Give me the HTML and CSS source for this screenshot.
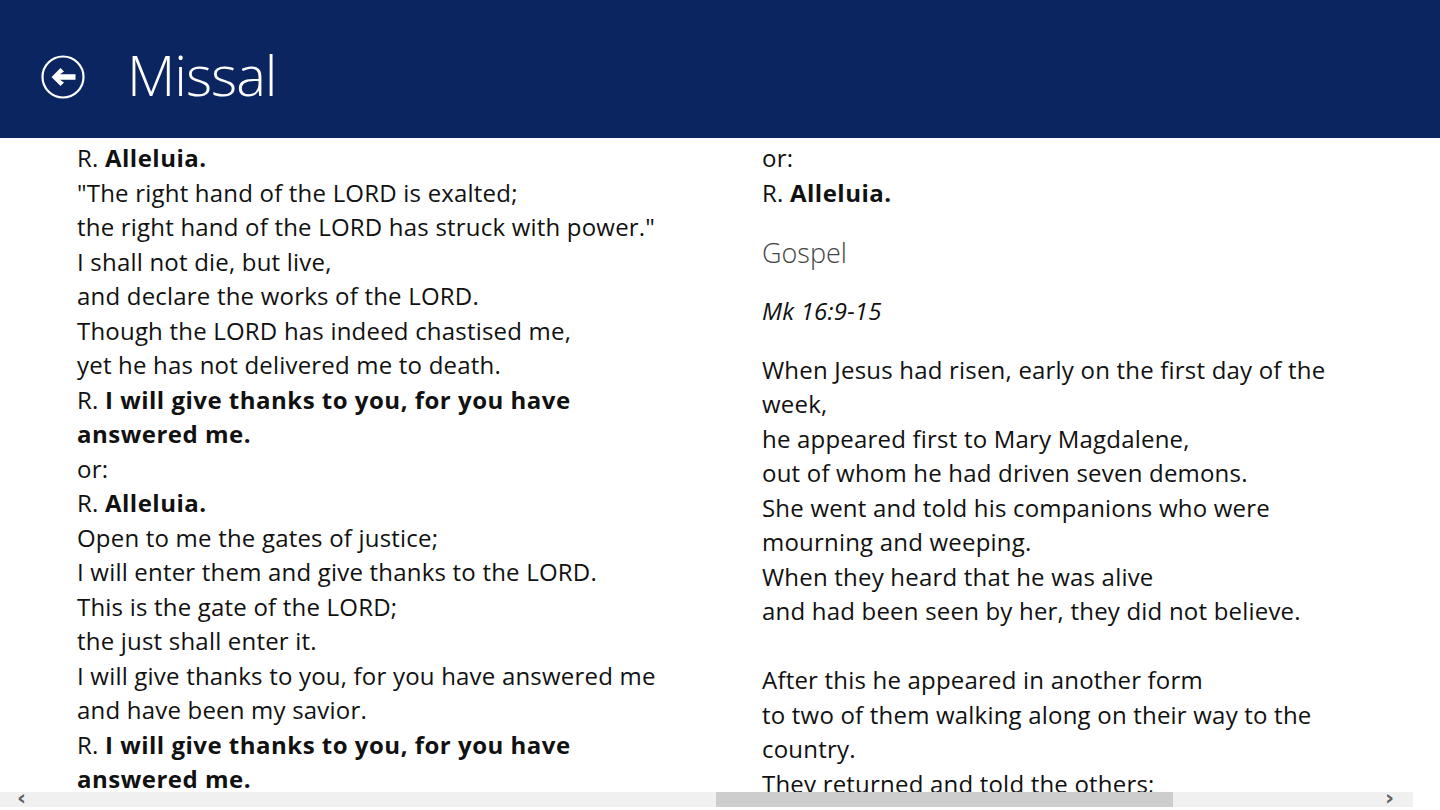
FILE: index.html
```html
<!DOCTYPE html>
<html lang="en">
<head>
<meta charset="utf-8">
<title>Missal</title>
<link rel="stylesheet" href="styles.css">
</head>
<body>
<header class="header">
  <button class="back" aria-label="Back">
    <svg width="46" height="46" viewBox="0 0 46 46">
      <circle cx="23" cy="23" r="20.5" fill="none" stroke="#fff" stroke-width="2.2"/>
      <polygon points="11.5,23 20.5,14 24,17.5 20,20.3 35.5,20.3 35.5,25.7 20,25.7 24,28.5 20.5,32" fill="#fff"/>
    </svg>
  </button>
  <h1 class="title">Missal</h1>
</header>
<main class="viewport">
  <div class="columns">
    <section class="col">
      <p class="line">R. <b>Alleluia.</b></p>
      <p class="line">"The right hand of the LORD is exalted;</p>
      <p class="line">the right hand of the LORD has struck with power."</p>
      <p class="line">I shall not die, but live,</p>
      <p class="line">and declare the works of the LORD.</p>
      <p class="line">Though the LORD has indeed chastised me,</p>
      <p class="line">yet he has not delivered me to death.</p>
      <p class="line">R. <b>I will give thanks to you, for you have answered me.</b></p>
      <p class="line">or:</p>
      <p class="line">R. <b>Alleluia.</b></p>
      <p class="line">Open to me the gates of justice;</p>
      <p class="line">I will enter them and give thanks to the LORD.</p>
      <p class="line">This is the gate of the LORD;</p>
      <p class="line">the just shall enter it.</p>
      <p class="line">I will give thanks to you, for you have answered me</p>
      <p class="line">and have been my savior.</p>
      <p class="line">R. <b>I will give thanks to you, for you have answered me.</b></p>
    </section>
    <section class="col">
      <p class="line">or:</p>
      <p class="line">R. <b>Alleluia.</b></p>
      <h2 class="heading">Gospel</h2>
      <p class="ref">Mk 16:9-15</p>
      <div class="passage">
        <p class="line">When Jesus had risen, early on the first day of the week,</p>
        <p class="line">he appeared first to Mary Magdalene,</p>
        <p class="line">out of whom he had driven seven demons.</p>
        <p class="line">She went and told his companions who were mourning and weeping.</p>
        <p class="line">When they heard that he was alive</p>
        <p class="line">and had been seen by her, they did not believe.</p>
        <p class="line blank">&nbsp;</p>
        <p class="line">After this he appeared in another form</p>
        <p class="line">to two of them walking along on their way to the country.</p>
        <p class="line">They returned and told the others;</p>
        <p class="line">but they did not believe them either.</p>
      </div>
    </section>
  </div>
</main>
<div class="scrollbar">
  <div class="track">
    <span class="arrow left">&#8249;</span>
    <div class="thumb"></div>
    <span class="arrow right">&#8250;</span>
  </div>
</div>
</body>
</html>
```

FILE: styles.css
```css
html, body {
  margin: 0;
  padding: 0;
  background: #ffffff;
  width: 1440px;
  height: 810px;
  overflow: hidden;
}

body {
  font-family: "Segoe UI", "Open Sans", "Noto Sans", sans-serif;
  color: #111111;
}

.header {
  height: 138px;
  background: #0b2561;
  display: flex;
  align-items: center;
  box-sizing: border-box;
  padding-left: 40px;
}

.back {
  width: 46px;
  height: 46px;
  padding: 0;
  margin: 16px 0 0 0;
  border: 0;
  background: transparent;
  display: block;
}

.back svg {
  display: block;
}

.title {
  margin: 0 0 0 41px;
  font-weight: 300;
  font-size: 56px;
  color: #ffffff;
  line-height: 1;
  padding-top: 10px;
  letter-spacing: -1px;
}

.viewport {
  height: 654px;
  overflow: hidden;
}

.columns {
  display: flex;
  gap: 85px;
  padding: 3px 0 0 77px;
}

.col {
  width: 600px;
  flex: none;
}

.line, .ref {
  margin: 0;
  font-size: 24px;
  line-height: 34.5px;
  letter-spacing: 0.2px;
}

.line b {
  font-weight: 700;
  letter-spacing: 0.5px;
}

.heading {
  margin: 26px 0 0 0;
  font-size: 27px;
  font-weight: 300;
  line-height: 34px;
  color: #444444;
}

.ref {
  font-style: italic;
  margin-top: 23.5px;
}

.passage {
  margin-top: 24.5px;
}

.scrollbar {
  height: 18px;
}

.track {
  width: 1413px;
  height: 15px;
  background: #f0f0f0;
  position: relative;
}

.thumb {
  position: absolute;
  left: 716px;
  width: 457px;
  top: 0;
  height: 15px;
  background: #cdcdcd;
}

.arrow {
  position: absolute;
  top: -5px;
  font-family: "DejaVu Sans", sans-serif;
  font-size: 22px;
  line-height: 22px;
  color: #606060;
  font-weight: 700;
}

.arrow.left {
  left: 17px;
}

.arrow.right {
  left: 1385px;
}
```
